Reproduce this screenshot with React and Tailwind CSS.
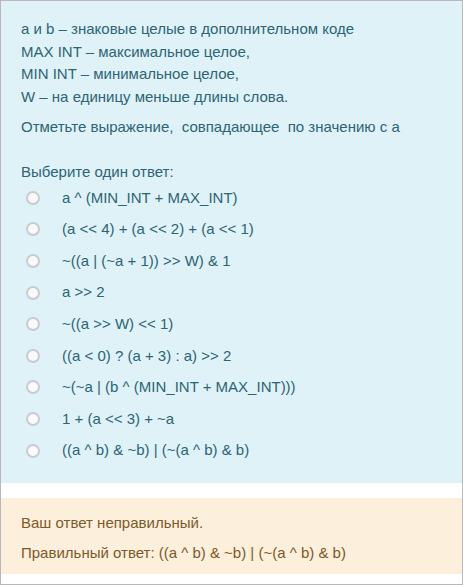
const options = [
  "a ^ (MIN_INT + MAX_INT)",
  "(a << 4) + (a << 2) + (a << 1)",
  "~((a | (~a + 1)) >> W) & 1",
  "a >> 2",
  "~((a >> W) << 1)",
  "((a < 0) ? (a + 3) : a) >> 2",
  "~(~a | (b ^ (MIN_INT + MAX_INT)))",
  "1 + (a << 3) + ~a",
  "((a ^ b) & ~b) | (~(a ^ b) & b)",
];

export default function App() {
  return (
    <div
      className="w-[463px] h-[585px] border border-[#b8b8b8] bg-white text-[15px] leading-[22.5px]"
      style={{ fontFamily: '"Liberation Sans", Arial, sans-serif' }}
    >
      {/* question */}
      <div className="bg-[#def2f8] text-[#2f6473] px-5 pt-[17px] pb-[17px]">
        <p>a и b – знаковые целые в дополнительном коде</p>
        <p>MAX INT – максимальное целое,</p>
        <p>MIN INT – минимальное целое,</p>
        <p>W – на единицу меньше длины слова.</p>
        <p className="mt-2">Отметьте выражение,&nbsp; совпадающее&nbsp; по значению с a</p>

        <p className="mt-[22px]">Выберите один ответ:</p>
        <div className="-mt-px flex flex-col">
          {options.map((o) => (
            <label key={o} className="flex items-center h-[31.6px]">
              <span className="ml-[5px] w-[14px] h-[14px] rounded-full border-2 border-[#c9cccf] bg-[#f9f9f9]" />
              <span className="ml-[22px]">{o}</span>
            </label>
          ))}
        </div>
      </div>

      {/* feedback */}
      <div className="mt-[15px] bg-[#fcefdc] text-[#7d5a29] px-5 pt-[14px] pb-[10px]">
        <p>Ваш ответ неправильный.</p>
        <p className="mt-[7px]">Правильный ответ: ((a ^ b) &amp; ~b) | (~(a ^ b) &amp; b)</p>
      </div>
    </div>
  );
}
